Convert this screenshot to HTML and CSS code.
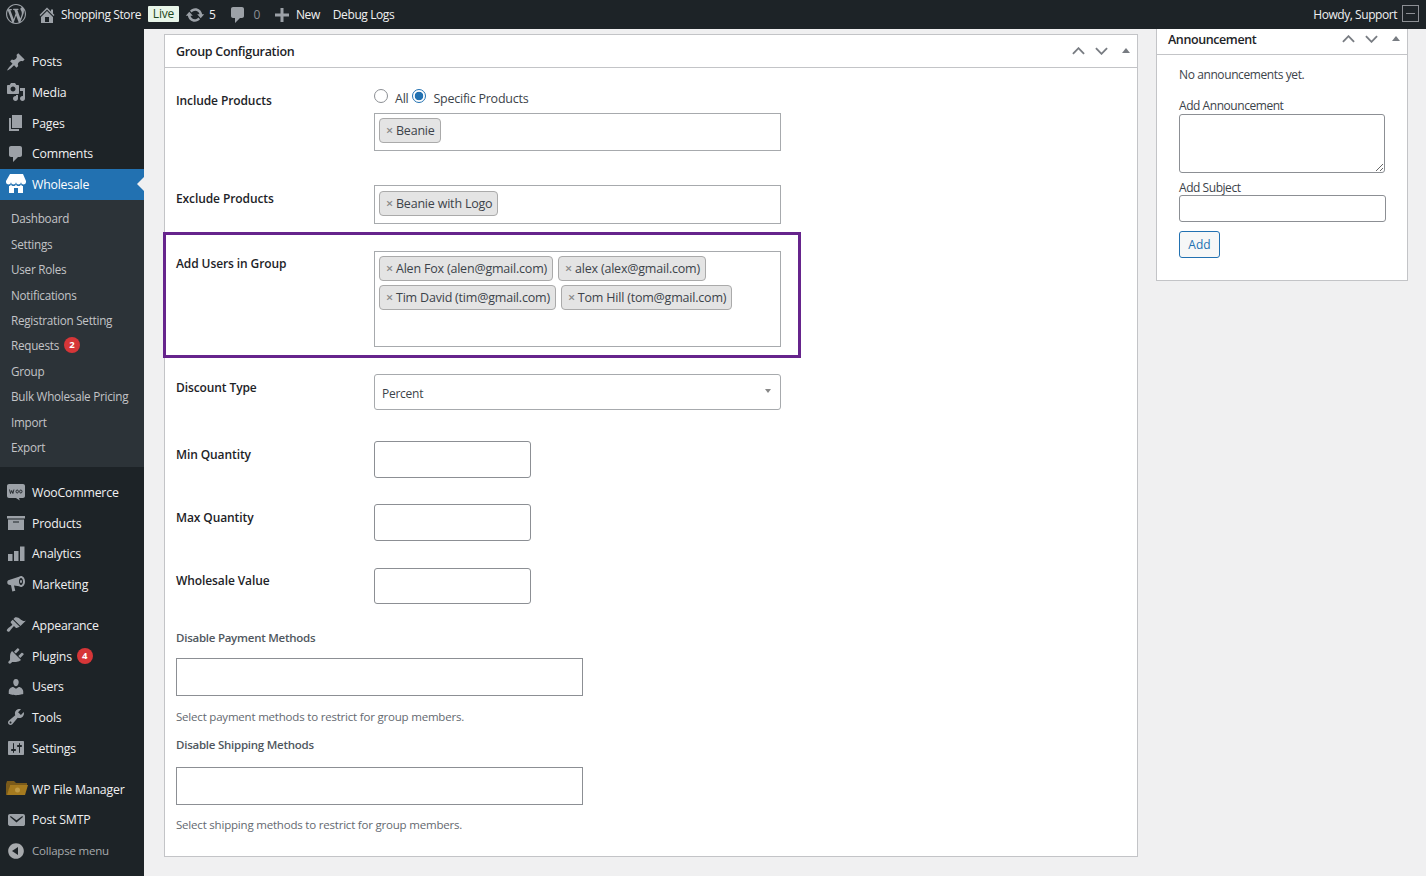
FILE: index.html
```html
<!DOCTYPE html>
<html lang="en">
<head>
    <meta charset="UTF-8">
    <title>Group Configuration</title>
    <link rel="stylesheet" href="styles.css">
</head>
<body>
    <div class="adminbar">
        <svg class="bar-logo" viewBox="0 0 20 20"><path d="M20 10c0-5.510-4.490-10-10-10C4.480 0 0 4.490 0 10c0 5.520 4.480 10 10 10 5.510 0 10-4.480 10-10zM7.780 15.370L4.370 6.220c.55-.02 1.170-.08 1.170-.08.5-.06.44-1.130-.06-1.110 0 0-1.450.11-2.370.11-.18 0-.37 0-.58-.01C4.120 2.690 6.890 1.050 10 1.050c2.310 0 4.410.88 5.990 2.350-.66-.11-1.600.38-1.600 1.540 0 .72.44 1.330.88 2.050.35.61.55 1.360.55 2.460 0 1.490-1.400 5-1.400 5l-3.030-8.370c.54-.02.82-.17.82-.17.5-.05.44-1.250-.06-1.220 0 0-1.440.12-2.380.12-.87 0-2.330-.12-2.330-.12-.5-.03-.56 1.200-.06 1.220l.92.08 1.260 3.410zM17.410 10c.24-.64.74-1.870.43-4.250.7 1.290 1.050 2.710 1.050 4.250 0 3.290-1.730 6.240-4.400 7.780.97-2.590 1.940-5.210 2.920-7.780zM6.100 18.090C3.120 16.650 1.110 13.530 1.110 10c0-1.300.23-2.480.72-3.590C3.250 10.300 4.670 14.200 6.100 18.090zm4.030-6.630l2.580 6.980c-.86.29-1.760.45-2.710.45-.79 0-1.570-.11-2.290-.33.81-2.380 1.620-4.730 2.420-7.100z"/></svg>
        <svg class="bar-icon home" viewBox="0 0 20 20"><path d="M16 8.500l1.530 1.530-1.060 1.060L10 4.620l-6.470 6.470-1.060-1.060L10 2.500l4 4v-2h2v4zm-6-2.460l6 5.990V18H4v-5.970zM12 17v-5H8v5h4z"/></svg>
        <span class="bar-text site-name">Shopping Store</span>
        <span class="live-badge">Live</span>
        <svg class="bar-icon updates" viewBox="0 0 20 20"><path d="M10.200 3.280c3.530 0 6.430 2.610 6.920 6h2.080l-3.500 4-3.500-4h2.320c-.45-1.970-2.210-3.450-4.320-3.450-1.450 0-2.730.71-3.540 1.780L4.950 5.660C6.230 4.200 8.110 3.280 10.200 3.280zm-.4 13.440c-3.520 0-6.430-2.610-6.920-6H.8l3.500-4c1.170 1.330 2.330 2.670 3.500 4H5.480c.45 1.970 2.210 3.450 4.320 3.450 1.450 0 2.730-.71 3.540-1.780l1.710 1.950c-1.280 1.460-3.150 2.380-5.250 2.380z"/></svg>
        <span class="bar-text updates-count">5</span>
        <svg class="bar-icon comment" viewBox="0 0 20 20"><path d="M5 2h9c1.100 0 2 .9 2 2v7c0 1.100-.9 2-2 2h-2l-5 5v-5H5c-1.100 0-2-.9-2-2V4c0-1.100.9-2 2-2z"/></svg>
        <span class="bar-text muted comment-count">0</span>
        <svg class="bar-icon plus" viewBox="0 0 20 20"><path d="M17 8.500v3h-5.500V17h-3v-5.500H3v-3h5.500V3h3v5.500z"/></svg>
        <span class="bar-text new-link">New</span>
        <span class="bar-text">Debug Logs</span>
        <span class="bar-text howdy">Howdy, Support</span>
        <span class="avatar"><span class="avatar-mark"></span></span>
    </div>

    <div class="layout">
        <nav class="sidebar">
            <a class="menu-item first"><svg viewBox="0 0 20 20"><path d="M10.440 3.020l1.820-1.820 6.360 6.350-1.830 1.820c-1.050-.68-2.480-.57-3.410.36l-.75.75c-.92.93-1.040 2.350-.35 3.410l-1.830 1.820-2.410-2.410-2.800 2.790c-.42.42-3.380 2.710-3.800 2.290s1.860-3.390 2.280-3.810l2.790-2.790L4.100 9.360l1.830-1.820c1.050.69 2.480.57 3.400-.36l.75-.75c.93-.92 1.050-2.350.36-3.410z"/></svg>Posts</a>
            <a class="menu-item"><svg viewBox="0 0 20 20"><path d="M13 11V4c0-.55-.45-1-1-1h-1.670L9 1H5L3.670 3H2c-.55 0-1 .45-1 1v7c0 .55.45 1 1 1h10c.55 0 1-.45 1-1zM7 4.500c1.380 0 2.500 1.120 2.500 2.500S8.380 9.500 7 9.500 4.500 8.380 4.500 7 5.620 4.500 7 4.500zM14 6h5v10.500c0 1.380-1.120 2.500-2.500 2.500S14 17.880 14 16.500s1.120-2.500 2.500-2.500c.17 0 .34.02.5.05V9h-3V6zm-4 8.050V13h2v3.500c0 1.380-1.120 2.500-2.500 2.500S7 17.880 7 16.500 8.120 14 9.500 14c.17 0 .34.02.5.05z"/></svg>Media</a>
            <a class="menu-item"><svg viewBox="0 0 20 20"><path d="M6 15V2h10v13H6zm-1 1h8v2H3V5h2v11z"/></svg>Pages</a>
            <a class="menu-item"><svg viewBox="0 0 20 20"><path d="M5 2h9c1.100 0 2 .9 2 2v7c0 1.100-.9 2-2 2h-2l-5 5v-5H5c-1.100 0-2-.9-2-2V4c0-1.100.9-2 2-2z"/></svg>Comments</a>
            <a class="menu-item active"><svg viewBox="0 0 20 20"><path d="M1 10c.41.29.96.43 1.500.43.55 0 1.090-.14 1.500-.43.62-.46 1-1.170 1-2 0 .83.370 1.540 1 2 .41.29.96.43 1.500.43.55 0 1.040-.14 1.500-.43.62-.46 1-1.170 1-2 0 .83.370 1.540 1 2 .41.29.95.43 1.500.43.54 0 1.040-.14 1.500-.43.62-.46 1-1.170 1-2 0 .83.380 1.540 1 2 .41.29.95.43 1.500.43.54 0 1.090-.14 1.500-.43.62-.46 1-1.170 1-2V7l-3-7H4L0 7v1c0 .83.370 1.540 1 2zm2 8.990h5v-5h4v5h5v-7c-.37-.05-.72-.16-1-.35-.63-.46-1-1.170-1-2 0 .83-.38 1.540-1 2-.46.29-.96.43-1.500.43-.55 0-1.090-.14-1.500-.43-.63-.46-1-1.170-1-2 0 .83-.38 1.540-1 2-.46.29-.95.43-1.500.43-.54 0-1.090-.14-1.500-.43-.63-.46-1-1.170-1-2 0 .83-.38 1.540-1 2-.28.19-.63.30-1 .35v7z"/></svg>Wholesale</a>
            <div class="submenu">
                <a>Dashboard</a>
                <a>Settings</a>
                <a>User Roles</a>
                <a>Notifications</a>
                <a>Registration Setting</a>
                <a>Requests <span class="count">2</span></a>
                <a>Group</a>
                <a>Bulk Wholesale Pricing</a>
                <a>Import</a>
                <a>Export</a>
            </div>
            <a class="menu-item group-start"><svg viewBox="0 0 20 20"><path d="M3 2h14c1.100 0 2 .9 2 2v10c0 1.100-.9 2-2 2h-4l.8 2.500L10 16H3c-1.100 0-2-.9-2-2V4c0-1.100.9-2 2-2z"/><path class="woo-mark" d="M3.500 7.500l1 4 1.200-3 1.200 3 1-4M10 9.500a1.200 1.500 0 1 0 2.400 0a1.200 1.500 0 1 0-2.400 0M13.600 9.500a1.200 1.500 0 1 0 2.400 0a1.200 1.500 0 1 0-2.400 0"/></svg>WooCommerce</a>
            <a class="menu-item"><svg viewBox="0 0 20 20"><path d="M19 3v2.500H1V3h18zM2 6.500h16V17H2V6.500zm11 3v-1H7v1h6z"/></svg>Products</a>
            <a class="menu-item"><svg viewBox="0 0 20 20"><path d="M2 10h4.500v7H2zM8 7h4.500v10H8zM14 2.500h4.500V17H14z"/></svg>Analytics</a>
            <a class="menu-item"><svg viewBox="0 0 20 20"><path d="M15 2c2.200 0 4 2.400 4 5.500S17.200 13 15 13c-.7 0-1.300-.2-1.900-.7L8 11.500l1.300 5.200-3 .8L5 11.200 3 10.800C2 10.600 1.300 9.800 1.300 8.800V8c0-1 .7-1.800 1.700-2l10-3.300C13.600 2.300 14.300 2 15 2zm0 2c-1.100 0-2 1.500-2 3.500s.9 3.500 2 3.500 2-1.500 2-3.500S16.100 4 15 4zm0 2c.6 0 1 .7 1 1.500S15.600 9 15 9s-1-.7-1-1.500.4-1.500 1-1.500z"/></svg>Marketing</a>
            <a class="menu-item group-start"><svg viewBox="0 0 20 20"><path d="M14.480 11.060L7.410 3.990l1.500-1.500c.5-.56 2.300-.47 3.510.32 1.210.8 1.430 1.280 2.910 2.100 1.180.64 2.450 1.260 4.450.85zm-.71.71L6.700 4.700 4.930 6.470c-.39.39-.39 1.020 0 1.410l1.060 1.060c.39.39.39 1.030 0 1.420-.6.6-1.430 1.150-2.210 1.700-.79.570-1.500 1.100-2.100 1.700-.9.900-1.200 1.800-.4 2.600s1.700.5 2.600-.4c.6-.6 1.130-1.310 1.700-2.100.55-.78 1.100-1.610 1.700-2.210.39-.39 1.030-.39 1.420 0l1.060 1.060c.39.39 1.020.39 1.410 0z"/></svg>Appearance</a>
            <a class="menu-item"><svg viewBox="0 0 20 20"><path d="M13.110 4.360L9.870 7.600 8 5.730l3.240-3.240c.35-.34 1.050-.2 1.560.32.52.51.66 1.210.31 1.550zm-8 1.770l.91-1.120 9.010 9.010-1.190.84c-.71.71-2.630 1.160-3.820 1.160H6.140L4.900 17.260c-.59.59-1.540.59-2.120 0-.59-.58-.59-1.530 0-2.120l1.240-1.240v-3.880c0-1.130.4-3.190 1.090-3.890zm7.260 3.970l3.240-3.240c.34-.35 1.040-.21 1.550.31.52.51.66 1.210.31 1.550l-3.240 3.250z"/></svg>Plugins <span class="count">4</span></a>
            <a class="menu-item"><svg viewBox="0 0 20 20"><path d="M10 9.250c-2.270 0-2.730-3.440-2.730-3.440C7 4.020 7.820 2 9.970 2c2.160 0 2.980 2.020 2.710 3.810 0 0-.41 3.440-2.680 3.440zm0 2.570L12.720 10c2.390 0 4.520 2.330 4.520 4.530v2.490s-3.650 1.130-7.240 1.130c-3.650 0-7.240-1.130-7.240-1.130v-2.490c0-2.250 1.940-4.480 4.470-4.480z"/></svg>Users</a>
            <a class="menu-item"><svg viewBox="0 0 20 20"><path d="M16.680 9.770c-1.340 1.340-3.300 1.670-4.950.99l-5.410 6.520c-.99.99-2.590.99-3.580 0s-.99-2.590 0-3.570l6.520-5.420c-.68-1.650-.35-3.610.99-4.950 1.280-1.280 3.120-1.620 4.720-1.060l-2.890 2.890 2.820 2.820 2.860-2.870c.53 1.580.18 3.390-1.080 4.650zM3.810 16.210c.4.39 1.040.39 1.430 0 .4-.4.4-1.040 0-1.430-.39-.4-1.030-.4-1.430 0-.39.39-.39 1.030 0 1.430z"/></svg>Tools</a>
            <a class="menu-item"><svg viewBox="0 0 20 20"><path d="M18 16V4c0-.55-.45-1-1-1H3c-.55 0-1 .45-1 1v12c0 .55.45 1 1 1h14c.55 0 1-.45 1-1zM8 11h1c.55 0 1 .45 1 1s-.45 1-1 1H8v1.500c0 .28-.22.5-.5.5s-.5-.22-.5-.5V13H6c-.55 0-1-.45-1-1s.45-1 1-1h1V5.500c0-.28.22-.5.5-.5s.5.22.5.5V11zm5-2h-1c-.55 0-1-.45-1-1s.45-1 1-1h1V5.500c0-.28.22-.5.5-.5s.5.22.5.5V7h1c.55 0 1 .45 1 1s-.45 1-1 1h-1v5.500c0 .28-.22.5-.5.5s-.5-.22-.5-.5V9z"/></svg>Settings</a>
            <a class="menu-item group-start"><svg class="folder" viewBox="0 0 24 20"><path class="folder-back" d="M1 5l1-3h7l2 2h11v2H5L3 16H1z"/><path class="folder-front" d="M5 6h18l-3 10H2z"/><circle class="folder-badge" cx="12.500" cy="11" r="2.500"/></svg>WP File Manager</a>
            <a class="menu-item"><svg viewBox="0 0 20 20"><path d="M3.870 4h13.250C18.150 4 19 4.840 19 5.880v8.250c0 1.040-.84 1.880-1.880 1.880H3.880C2.840 16 2 15.160 2 14.120V5.880C2 4.840 2.840 4 3.870 4zm6.620 8.600l6.130-5.240c.27-.21.47-.63.25-.93-.21-.3-.6-.31-.88-.08l-5.500 3.930L5 6.350c-.28-.23-.67-.22-.88.08-.22.3-.02.72.25.93z"/></svg>Post SMTP</a>
            <a class="menu-item collapse"><svg viewBox="0 0 20 20"><path d="M10 2.160c4.330 0 7.840 3.510 7.840 7.840s-3.510 7.840-7.840 7.840S2.160 14.330 2.160 10 5.710 2.160 10 2.160zM12 14V6l-6 4z"/></svg>Collapse menu</a>
        </nav>

        <main class="content">
            <section class="card group-card">
                <header class="card-head">
                    <h2>Group Configuration</h2>
                    <div class="card-actions">
                        <svg viewBox="0 0 14 8"><path d="M1 7l6-6 6 6"/></svg>
                        <svg viewBox="0 0 14 8"><path d="M1 1l6 6 6-6"/></svg>
                        <span class="toggle"></span>
                    </div>
                </header>

                <div class="form-row include-row">
                    <label class="row-label">Include Products</label>
                    <div class="field">
                        <div class="radio-line">
                            <input type="radio" name="scope" class="radio">
                            <span class="radio-text">All</span>
                            <input type="radio" name="scope" class="radio" checked>
                            <span class="radio-text">Specific Products</span>
                        </div>
                        <div class="token-box"><span class="token"><i>×</i>Beanie</span></div>
                    </div>
                </div>

                <div class="form-row exclude-row">
                    <label class="row-label">Exclude Products</label>
                    <div class="field">
                        <div class="token-box"><span class="token"><i>×</i>Beanie with Logo</span></div>
                    </div>
                </div>

                <div class="form-row highlight-row">
                    <label class="row-label">Add Users in Group</label>
                    <div class="field">
                        <div class="token-box users-box">
                            <span class="token"><i>×</i>Alen Fox (alen@gmail.com)</span>
                            <span class="token"><i>×</i>alex (alex@gmail.com)</span>
                            <span class="token"><i>×</i>Tim David (tim@gmail.com)</span>
                            <span class="token"><i>×</i>Tom Hill (tom@gmail.com)</span>
                        </div>
                    </div>
                </div>

                <div class="form-row discount-row">
                    <label class="row-label">Discount Type</label>
                    <div class="field">
                        <div class="select-box">Percent<span class="select-arrow"></span></div>
                    </div>
                </div>

                <div class="form-row min-row">
                    <label class="row-label">Min Quantity</label>
                    <input type="text" class="text-input">
                </div>
                <div class="form-row max-row">
                    <label class="row-label">Max Quantity</label>
                    <input type="text" class="text-input">
                </div>
                <div class="form-row value-row">
                    <label class="row-label">Wholesale Value</label>
                    <input type="text" class="text-input value-input">
                </div>

                <div class="stack payment">
                    <label class="stack-label">Disable Payment Methods</label>
                    <input type="text" class="wide-input">
                    <p class="help">Select payment methods to restrict for group members.</p>
                </div>
                <div class="stack shipping">
                    <label class="stack-label">Disable Shipping Methods</label>
                    <input type="text" class="wide-input">
                    <p class="help">Select shipping methods to restrict for group members.</p>
                </div>
            </section>

            <aside class="card side-card">
                <header class="side-head">
                    <h2>Announcement</h2>
                    <div class="card-actions">
                        <svg viewBox="0 0 14 8"><path d="M1 7l6-6 6 6"/></svg>
                        <svg viewBox="0 0 14 8"><path d="M1 1l6 6 6-6"/></svg>
                        <span class="toggle"></span>
                    </div>
                </header>
                <div class="side-body">
                    <p class="no-items">No announcements yet.</p>
                    <label class="side-label">Add Announcement</label>
                    <textarea class="side-textarea"></textarea>
                    <label class="side-label subject-label">Add Subject</label>
                    <input type="text" class="side-input">
                    <button class="add-button">Add</button>
                </div>
            </aside>
        </main>
    </div>
</body>
</html>
```

FILE: styles.css
```css
html, body {
    height: 100%;
}

body {
    margin: 0;
    background-color: #f0f0f1;
    color: #3c434a;
    font-family: "Open Sans", "Noto Sans", Arial, sans-serif;
    font-size: 12px;
    overflow: hidden;
}

h2, p {
    margin: 0;
}

input, textarea {
    box-sizing: border-box;
    display: block;
    margin: 0;
    background: #fff;
}

/* top bar */
.adminbar {
    height: 29px;
    background-color: #1d2327;
    display: flex;
    align-items: center;
    color: #f0f0f1;
}

.bar-logo {
    width: 20px;
    height: 20px;
    margin-left: 6px;
    margin-top: -2px;
    fill: #9ca1a7;
}

.bar-icon {
    width: 20px;
    height: 20px;
    fill: #9ca1a7;
}

.bar-text {
    letter-spacing: -0.4px;
    white-space: nowrap;
}

.muted {
    color: #8c8f94;
}

.home {
    margin-left: 11px;
}

.site-name {
    margin-left: 4px;
}

.live-badge {
    margin-left: 7px;
    height: 16px;
    width: 31px;
    margin-top: -2px;
    background-color: #e8f5e9;
    color: #1e4620;
    border-radius: 1px;
    text-align: center;
    line-height: 15px;
    letter-spacing: -0.2px;
}

.updates {
    margin-left: 6px;
}

.updates-count {
    margin-left: 4px;
}

.comment {
    margin-left: 13px;
}

.comment-count {
    margin-left: 5px;
}

.plus {
    margin-left: 12px;
}

.new-link {
    margin-left: 4px;
    margin-right: 13px;
}

.howdy {
    margin-left: auto;
    letter-spacing: -0.45px;
}

.avatar {
    box-sizing: border-box;
    width: 17px;
    height: 17px;
    margin: -2px 7px 0 5px;
    border: 1px solid #8c8f94;
    background-color: #1d2327;
    display: flex;
    align-items: center;
    justify-content: center;
}

.avatar-mark {
    width: 9px;
    height: 1px;
    background-color: #8c8f94;
}

/* sidebar */
.layout {
    display: flex;
    height: 847px;
}

.sidebar {
    width: 144px;
    flex-shrink: 0;
    background-color: #1d2327;
    color: #f0f0f1;
    overflow: hidden;
}

.menu-item {
    height: 30.7px;
    display: flex;
    align-items: center;
    font-size: 12.3px;
    letter-spacing: -0.2px;
    position: relative;
}

.menu-item svg {
    width: 20px;
    height: 20px;
    margin: 0 6px;
    flex-shrink: 0;
    fill: #9ca1a7;
}

.menu-item.first {
    margin-top: 17.3px;
}

.group-start {
    margin-top: 10.35px;
}

.menu-item.active {
    background-color: #2271b1;
    color: #fff;
}

.menu-item.active svg {
    fill: #fff;
}

/* little notch pointing at the content */
.menu-item.active::after {
    content: "";
    position: absolute;
    right: 0;
    top: 8px;
    border: 7px solid transparent;
    border-right-color: #f0f0f1;
    border-left-width: 0;
}

.menu-item svg.folder {
    width: 24px;
    margin: 0 3px 0 5px;
}

.folder-back {
    fill: #7a5a1a;
}

.folder-front {
    fill: #a57a1f;
}

.folder-badge {
    fill: #c09a45;
}

.woo-mark {
    fill: none;
    stroke: #1d2327;
    stroke-width: 0.9;
}

.collapse {
    color: #a7aaad;
    font-size: 11.5px;
}

.menu-item.collapse svg {
    fill: #a7aaad;
}

.submenu {
    background-color: #2c3338;
    color: #c3c4c7;
    padding: 6px 0 7px;
    font-size: 11.7px;
}

.submenu a {
    height: 25.4px;
    padding-left: 11px;
    display: flex;
    align-items: center;
    letter-spacing: -0.25px;
    white-space: nowrap;
}

.count {
    width: 16px;
    height: 16px;
    margin-left: 5px;
    border-radius: 50%;
    background-color: #d63638;
    color: #fff;
    font-size: 9.5px;
    font-weight: 700;
    line-height: 16px;
    text-align: center;
    letter-spacing: 0;
}

/* main column */
.content {
    flex: 1;
    display: flex;
    align-items: flex-start;
}

.card {
    box-sizing: border-box;
    background-color: #fff;
    border: 1px solid #c3c4c7;
}

.group-card {
    width: 974px;
    height: 823px;
    margin: 5px 0 0 20px;
}

.card-head {
    height: 32px;
    padding-left: 11px;
    border-bottom: 1px solid #c3c4c7;
    display: flex;
    align-items: center;
    justify-content: space-between;
}

.card-head h2, .side-head h2 {
    font-size: 12.5px;
    font-weight: 600;
    color: #1d2327;
    letter-spacing: -0.3px;
}

.side-head h2 {
    letter-spacing: -0.4px;
}

.card-actions {
    display: flex;
    align-items: center;
}

.card-actions svg {
    width: 13px;
    height: 8px;
    margin-right: 10px;
    fill: none;
    stroke: #787c82;
    stroke-width: 2;
}

.toggle {
    width: 0;
    height: 0;
    margin: -2px 7px 0 4px;
    border: 4px solid transparent;
    border-top-width: 0;
    border-bottom: 5px solid #787c82;
}

.form-row {
    display: flex;
    padding-left: 11px;
}

.row-label {
    box-sizing: border-box;
    width: 198px;
    flex-shrink: 0;
    padding-top: 5px;
    line-height: 18px;
    font-weight: 600;
    font-size: 12px;
    color: #1d2327;
    letter-spacing: -0.1px;
}

.include-row .row-label,
.highlight-row .row-label,
.value-row .row-label {
    padding-top: 4px;
}

.field {
    width: 407px;
}

.include-row {
    margin-top: 20px;
}

.radio-line {
    height: 25px;
    display: flex;
    align-items: flex-start;
}

.radio {
    appearance: none;
    box-sizing: border-box;
    width: 14px;
    height: 14px;
    margin-top: 1px;
    border: 1px solid #8c8f94;
    border-radius: 50%;
    flex-shrink: 0;
}

.radio:checked {
    border-color: #2271b1;
    background: radial-gradient(circle, #2271b1 0 4px, #fff 4.6px);
}

.radio-text {
    margin: 2px 4px 0 7px;
    line-height: 18px;
    font-size: 12.5px;
    letter-spacing: -0.25px;
}

.token-box {
    box-sizing: border-box;
    height: 38px;
    padding: 4px;
    border: 1px solid #a7aaad;
    display: flex;
    flex-wrap: wrap;
    gap: 4px 5px;
    align-content: flex-start;
}

.token {
    box-sizing: border-box;
    height: 25px;
    padding: 0 5px 0 6px;
    background-color: #e4e4e4;
    border: 1px solid #aaa;
    border-radius: 4px;
    font-size: 12.5px;
    line-height: 23px;
    letter-spacing: -0.2px;
    white-space: nowrap;
}

.token i {
    margin-right: 3px;
    font-style: normal;
    font-weight: 600;
    color: #888;
}

.exclude-row {
    margin-top: 34px;
}

.exclude-row .token-box {
    height: 39px;
    padding-top: 5px;
}

.highlight-row {
    box-sizing: border-box;
    width: 638px;
    height: 126px;
    margin: 8px 0 0 -2px;
    padding: 16px 0 0 10px;
    border: 3px solid #66248c;
}

.users-box {
    height: 96px;
}

.discount-row {
    margin-top: 16px;
}

.select-box {
    box-sizing: border-box;
    height: 36px;
    padding-left: 7px;
    border: 1px solid #a7aaad;
    border-radius: 3px;
    line-height: 37px;
    letter-spacing: -0.25px;
    position: relative;
}

.select-arrow {
    position: absolute;
    right: 9px;
    top: 14px;
    border: 3px solid transparent;
    border-top: 4px solid #888;
    border-bottom-width: 0;
}

.text-input {
    width: 157px;
    height: 37px;
    border: 1px solid #8c8f94;
    border-radius: 3px;
}

.value-input {
    height: 36px;
}

.min-row {
    margin-top: 31px;
}

.max-row {
    margin-top: 26px;
}

.value-row {
    margin-top: 27px;
}

.stack {
    padding-left: 11px;
}

.payment {
    margin-top: 25px;
}

.shipping {
    margin-top: 10px;
}

.stack-label {
    display: block;
    line-height: 18px;
    font-size: 11.5px;
    font-weight: 600;
    color: #50575e;
    letter-spacing: -0.25px;
}

.wide-input {
    width: 407px;
    height: 38px;
    margin-top: 11px;
    border: 1px solid #8c8f94;
}

.shipping .wide-input {
    margin-top: 13px;
}

.help {
    margin-top: 12px;
    line-height: 18px;
    font-size: 11.5px;
    color: #646970;
    letter-spacing: -0.2px;
}

.shipping .help {
    margin-top: 11px;
}

/* right column */
.side-card {
    width: 252px;
    height: 252px;
    margin-left: 18px;
    border-top: 0;
}

.side-head {
    box-sizing: content-box;
    height: 20px;
    padding: 0 0 5px 11px;
    border-bottom: 1px solid #c3c4c7;
    display: flex;
    align-items: center;
    justify-content: space-between;
}

.side-body {
    padding: 11px 21px 0 22px;
}

.no-items {
    line-height: 18px;
    letter-spacing: -0.4px;
}

.side-label {
    display: block;
    margin-top: 13px;
    line-height: 18px;
    letter-spacing: -0.45px;
}

.side-textarea {
    width: 206px;
    height: 59px;
    margin-top: -1px;
    border: 1px solid #8c8f94;
    border-radius: 3px;
}

.subject-label {
    margin-top: 6px;
}

.side-input {
    width: 207px;
    height: 27px;
    margin-top: -2px;
    border: 1px solid #8c8f94;
    border-radius: 3px;
}

.add-button {
    display: block;
    width: 41px;
    height: 27px;
    margin-top: 9px;
    padding: 0;
    background-color: #f6f7f7;
    border: 1px solid #2271b1;
    border-radius: 3px;
    color: #2271b1;
    font-family: inherit;
    font-size: 12px;
}
```
